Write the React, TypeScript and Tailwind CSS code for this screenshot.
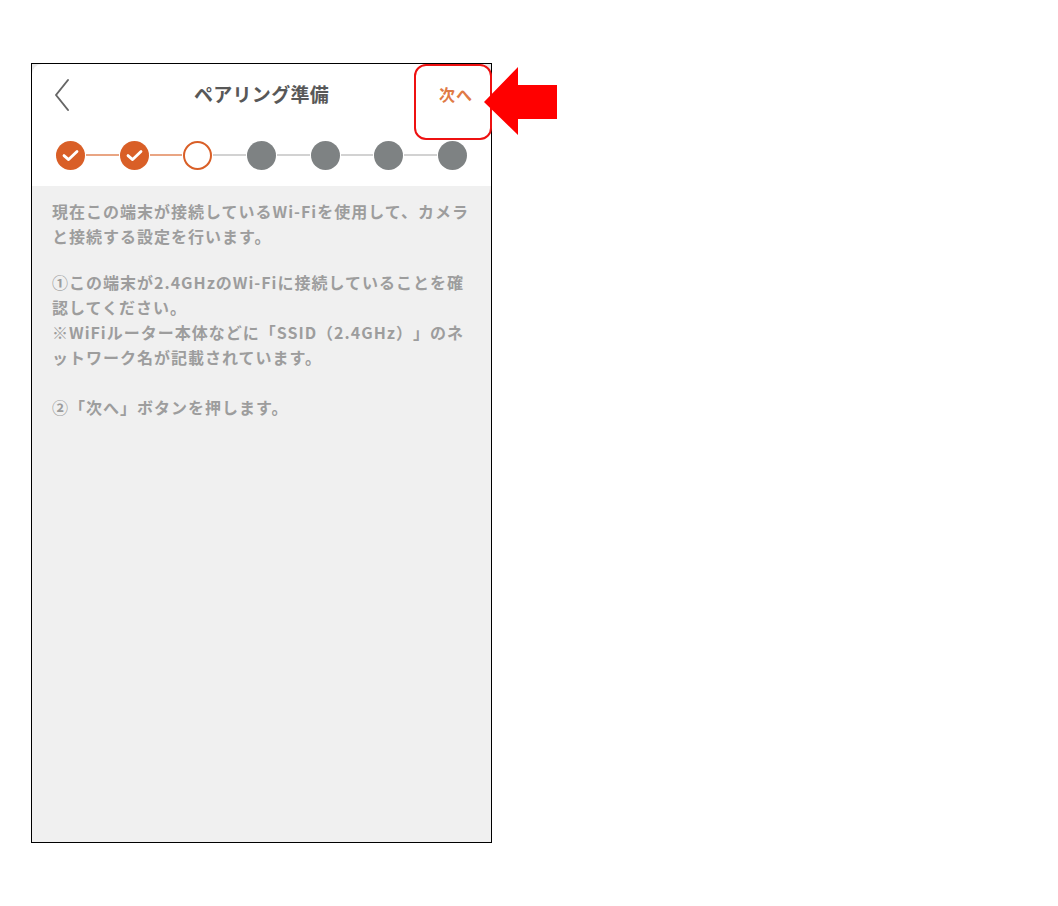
import React from 'react';

const jp = { fontFamily: '"Noto Sans CJK JP", "Noto Sans", sans-serif' };

type StepState = 'done' | 'current' | 'todo';

const steps: StepState[] = ['done', 'done', 'current', 'todo', 'todo', 'todo', 'todo'];

const StepDot: React.FC<{ state: StepState }> = ({ state }) => {
  if (state === 'done') {
    return (
      <div className="w-[29px] h-[29px] rounded-full bg-[#d95f27] flex items-center justify-center shrink-0">
        <svg width="29" height="29" viewBox="0 0 29 29" fill="none">
          <path d="M8 14.6 L12.6 18.6 L21 10.4" stroke="white" strokeWidth="2.8" strokeLinecap="round" strokeLinejoin="round" />
        </svg>
      </div>
    );
  }
  if (state === 'current') {
    return <div className="w-[29px] h-[29px] rounded-full bg-white border-2 border-[#d95f27] shrink-0" />;
  }
  return <div className="w-[29px] h-[29px] rounded-full bg-[#7e8283] shrink-0" />;
};

const Stepper: React.FC = () => (
  <div className="flex items-center px-[24px] h-[62px]">
    {steps.map((s, i) => (
      <React.Fragment key={i}>
        {i > 0 && (
          <div
            className={`flex-1 h-[2px] mx-[1px] ${i <= 2 ? 'bg-[#e9a583]' : 'bg-[#d2d2d2]'}`}
          />
        )}
        <StepDot state={s} />
      </React.Fragment>
    ))}
  </div>
);

export default function App() {
  return (
    <div className="relative w-[1058px] h-[906px] bg-white overflow-hidden" style={jp}>
      <div className="ml-[31px] pt-[63px]">
        <div className="w-[461px] h-[780px] border border-black bg-[#e9e9e9] flex flex-col">
          <div className="bg-white rounded-t-[10px]">
            <div className="relative h-[60px] flex items-center justify-center">
              <button className="absolute left-[18px] top-[14px] w-[24px] h-[34px] flex items-center justify-center">
                <svg width="18" height="34" viewBox="0 0 18 34" fill="none">
                  <path d="M15 2 L3 17 L15 32" stroke="#666" strokeWidth="2" strokeLinecap="round" strokeLinejoin="round" />
                </svg>
              </button>
              <h1 className="text-[19px] font-bold text-[#585858] tracking-[0.3px]">ペアリング準備</h1>
              <span className="absolute right-[18px] top-[18px] text-[16px] font-bold text-[#e07a45] tracking-[1px]">次へ</span>
            </div>
            <Stepper />
          </div>
          <div className="flex-1 bg-[#f0f0f0] px-5 pt-[13px] text-[16px] leading-[25px] font-bold text-[#9d9d9d] tracking-[1px] whitespace-nowrap [text-spacing-trim:space-all]">
            <p>
              現在この端末が接続しているWi-Fiを使用して、カメラ
              <br />
              と接続する設定を行います。
            </p>
            <p className="mt-[21px]">
              ①この端末が2.4GHzのWi-Fiに接続していることを確
              <br />
              認してください。
              <br />
              ※WiFiルーター本体などに「SSID（2.4GHz）」のネ
              <br />
              ットワーク名が記載されています。
            </p>
            <p className="mt-[25px]">②「次へ」ボタンを押します。</p>
          </div>
        </div>
      </div>

      {/* annotation: highlight box and arrow */}
      <div className="absolute left-[414px] top-[64px] w-[78px] h-[76px] border-2 border-[#ee1111] rounded-[12px]" />
      <svg className="absolute left-[484px] top-[67px]" width="74" height="69" viewBox="0 0 74 69">
        <polygon points="0,35 34,0 34,18 73,18 73,52 34,52 34,68" fill="#ff0000" />
      </svg>
    </div>
  );
}
